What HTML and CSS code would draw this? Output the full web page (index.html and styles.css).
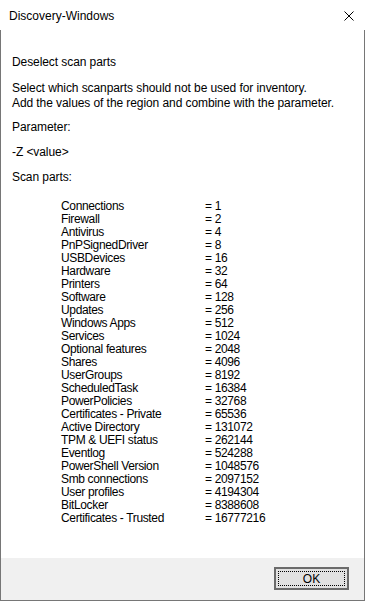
FILE: index.html
```html
<!DOCTYPE html>
<html lang="en">

<head>
    <meta charset="UTF-8">
    <meta name="viewport" content="width=device-width, initial-scale=1.0">
    <title>Discovery-Windows</title>
    <link rel="stylesheet" href="styles.css">
</head>

<body>

    <div class="window">
        <!-- Title bar -->
        <div class="titlebar">
            <span class="title">Discovery-Windows</span>
            <span class="close-btn">
                <svg width="10" height="10" viewBox="0 0 10 10">
                    <path d="M0.5 0.5 L9.5 9.5 M9.5 0.5 L0.5 9.5" stroke="#000" stroke-width="1" fill="none"/>
                </svg>
            </span>
        </div>

        <!-- Dialog content -->
        <div class="content">
            <div class="line heading">Deselect scan parts</div>
            <div class="line gap-1">Select which scanparts should not be used for inventory.</div>
            <div class="line">Add the values of the region and combine with the parameter.</div>
            <div class="line gap-2">Parameter:</div>
            <div class="line gap-3">-Z &lt;value&gt;</div>
            <div class="line gap-3">Scan parts:</div>

            <div class="parts">
                <span>Connections</span><span>= 1</span>
                <span>Firewall</span><span>= 2</span>
                <span>Antivirus</span><span>= 4</span>
                <span>PnPSignedDriver</span><span>= 8</span>
                <span>USBDevices</span><span>= 16</span>
                <span>Hardware</span><span>= 32</span>
                <span>Printers</span><span>= 64</span>
                <span>Software</span><span>= 128</span>
                <span>Updates</span><span>= 256</span>
                <span>Windows Apps</span><span>= 512</span>
                <span>Services</span><span>= 1024</span>
                <span>Optional features</span><span>= 2048</span>
                <span>Shares</span><span>= 4096</span>
                <span>UserGroups</span><span>= 8192</span>
                <span>ScheduledTask</span><span>= 16384</span>
                <span>PowerPolicies</span><span>= 32768</span>
                <span>Certificates - Private</span><span>= 65536</span>
                <span>Active Directory</span><span>= 131072</span>
                <span>TPM &amp; UEFI status</span><span>= 262144</span>
                <span>Eventlog</span><span>= 524288</span>
                <span>PowerShell Version</span><span>= 1048576</span>
                <span>Smb connections</span><span>= 2097152</span>
                <span>User profiles</span><span>= 4194304</span>
                <span>BitLocker</span><span>= 8388608</span>
                <span>Certificates - Trusted</span><span>= 16777216</span>
            </div>
        </div>

        <!-- Button strip -->
        <div class="footer">
            <button class="ok-btn"><span class="focus">OK</span></button>
        </div>
    </div>

</body>

</html>
```

FILE: styles.css
```css
/* Page */
body {
    margin: 0;
    background: #fff;
    font-family: "Liberation Sans", Arial, sans-serif;
    font-size: 12px;
    color: #000;
}

.window {
    width: 365px;
    height: 601px;
    display: flex;
    flex-direction: column;
}

/* Title bar */
.titlebar {
    height: 30px;
    display: flex;
    align-items: center;
    justify-content: space-between;
    padding: 0 11px 0 9px;
    box-sizing: border-box;
}

.title {
    font-size: 12px;
    margin-top: 1px;
}

.close-btn {
    display: flex;
    margin-top: 1px;
}

/* Content */
.content {
    flex: 1;
    border-left: 1px solid #767676;
    border-right: 1px solid #767676;
    padding: 25px 0 0 11px;
}

.line {
    line-height: 15px;
    white-space: nowrap;
    letter-spacing: -0.08px;
}

.gap-1 {
    margin-top: 11px;
}

.gap-2 {
    margin-top: 9px;
}

.gap-3 {
    margin-top: 10px;
}

.parts {
    display: grid;
    grid-template-columns: 144px auto;
    line-height: 13px;
    letter-spacing: -0.35px;
    margin: 15px 0 0 49px;
}

/* Footer */
.footer {
    height: 43px;
    box-sizing: border-box;
    background: #f0f0f0;
    border: 1px solid #767676;
    border-top: none;
    display: flex;
    justify-content: flex-end;
    align-items: flex-start;
    padding: 9px 15px 0 0;
}

.ok-btn {
    width: 75px;
    height: 23px;
    padding: 2px;
    box-sizing: border-box;
    background: #e1e1e1;
    border: 2px solid #6b6b6b;
    font-family: "Liberation Sans", Arial, sans-serif;
    font-size: 12px;
    color: #000;
    display: flex;
}

.focus {
    flex: 1;
    border: 1px dotted #000;
    display: flex;
    align-items: center;
    justify-content: center;
}
```
